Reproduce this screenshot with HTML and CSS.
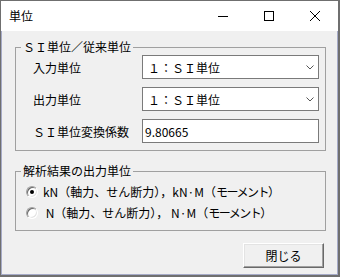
FILE: index.html
```html
<!DOCTYPE html>
<html lang="ja">
<head>
    <meta charset="UTF-8">
    <title>単位</title>
    <link rel="stylesheet" href="styles.css">
</head>
<body>
    <div class="window">
        <div class="titlebar">
            <span class="title">単位</span>
            <div class="caption-buttons">
                <span class="caption-btn">
                    <svg width="10" height="10" viewBox="0 0 10 10"><path d="M0 5.5h10" stroke="#000" stroke-width="1"/></svg>
                </span>
                <span class="caption-btn">
                    <svg width="10" height="10" viewBox="0 0 10 10"><rect x="0.5" y="0.5" width="9" height="9" fill="none" stroke="#000" stroke-width="1"/></svg>
                </span>
                <span class="caption-btn">
                    <svg width="10" height="10" viewBox="0 0 10 10"><path d="M0 0L10 10M10 0L0 10" stroke="#000" stroke-width="1"/></svg>
                </span>
            </div>
        </div>

        <div class="client">
            <fieldset class="group group-units">
                <legend>ＳＩ単位／従来単位</legend>
                <div class="form-grid">
                    <label>入力単位</label>
                    <div class="combo">
                        <span>１：ＳＩ単位</span>
                        <svg class="chevron" width="8" height="5" viewBox="0 0 8 5"><path d="M0.5 0.5L4 4L7.5 0.5" fill="none" stroke="#555" stroke-width="1"/></svg>
                    </div>

                    <label>出力単位</label>
                    <div class="combo">
                        <span>１：ＳＩ単位</span>
                        <svg class="chevron" width="8" height="5" viewBox="0 0 8 5"><path d="M0.5 0.5L4 4L7.5 0.5" fill="none" stroke="#555" stroke-width="1"/></svg>
                    </div>

                    <label>ＳＩ単位変換係数</label>
                    <div class="textbox">9.80665</div>
                </div>
            </fieldset>

            <fieldset class="group group-output">
                <legend>解析結果の出力単位</legend>
                <div class="radio-row">
                    <span class="radio checked"></span>
                    <span>kN（軸力、せん断力），kN·M（<span class="kana">モーメント</span>）</span>
                </div>
                <div class="radio-row">
                    <span class="radio"></span>
                    <span>&nbsp;N（軸力、せん断力），&nbsp;N·M（<span class="kana">モーメント</span>）</span>
                </div>
            </fieldset>

            <div class="actions">
                <button class="btn">閉じる</button>
            </div>
        </div>
    </div>
</body>
</html>
```

FILE: styles.css
```css
body {
    margin: 0;
    font-family: "Noto Sans CJK JP", sans-serif;
    font-size: 12px;
    color: #000;
    background: #fff;
}

.window {
    width: 340px;
    height: 277px;
    box-sizing: border-box;
    border: 1px solid #6f6f6f;
    border-right-width: 2px;
    border-bottom-width: 2px;
    display: flex;
    flex-direction: column;
}

.titlebar {
    height: 30px;
    background: #fff;
    display: flex;
    align-items: center;
    padding-left: 8px;
}

.title {
    flex: 1;
    line-height: 14px;
}

.caption-buttons {
    display: flex;
    height: 30px;
}

.caption-btn {
    width: 46px;
    display: flex;
    align-items: center;
    justify-content: center;
}

.caption-btn svg {
    display: block;
}

.client {
    flex: 1;
    background: #f0f0f0;
    border: 1px solid #a6abc8;
    border-top: none;
    padding-top: 9px;
    display: flex;
    flex-direction: column;
}

.group {
    margin: 0 11px 0 13px;
    border: 1px solid #a0a0a0;
    min-inline-size: 0;
}

.group legend {
    line-height: 14px;
    padding: 0 2px;
}

.group-units {
    padding: 1px 6px 7px 17px;
}

.group-units legend {
    margin-left: -12px;
}

.group-output {
    margin-top: 13px;
    padding: 3px 6px 7px 10px;
}

.group-output legend {
    margin-left: -5px;
}

.form-grid {
    display: grid;
    grid-template-columns: 109px 177px;
    grid-auto-rows: 24px;
    row-gap: 8px;
    align-items: center;
}

.combo,
.textbox {
    height: 24px;
    box-sizing: border-box;
    border: 1px solid #7a7a7a;
    background: #fff;
    display: flex;
    align-items: center;
}

.combo {
    padding: 0 4px 0 5px;
    justify-content: space-between;
}

.textbox {
    padding-left: 2px;
}

.chevron {
    display: block;
}

.radio-row {
    height: 21px;
    display: flex;
    align-items: center;
    gap: 5px;
}

.kana {
    letter-spacing: -1.5px;
}

.radio {
    width: 12px;
    height: 12px;
    box-sizing: border-box;
    border-radius: 50%;
    background: #fff;
    border: 1px solid;
    border-color: #a0a0a0 #fff #fff #a0a0a0;
    box-shadow: inset 1px 1px 0 #696969, inset -1px -1px 0 #e3e3e3;
    display: flex;
    align-items: center;
    justify-content: center;
}

.radio.checked::after {
    content: "";
    width: 4px;
    height: 4px;
    border-radius: 50%;
    background: #000;
}

.actions {
    display: flex;
    justify-content: flex-end;
    margin-top: 12px;
    padding-right: 13px;
}

.btn {
    width: 81px;
    height: 25px;
    box-sizing: border-box;
    font-family: inherit;
    font-size: 12px;
    color: #000;
    background: #f0f0f0;
    border: 1px solid;
    border-color: #fff #696969 #696969 #fff;
    box-shadow: inset -1px -1px 0 #a0a0a0, inset 1px 1px 0 #e3e3e3;
    padding: 0;
}
```
